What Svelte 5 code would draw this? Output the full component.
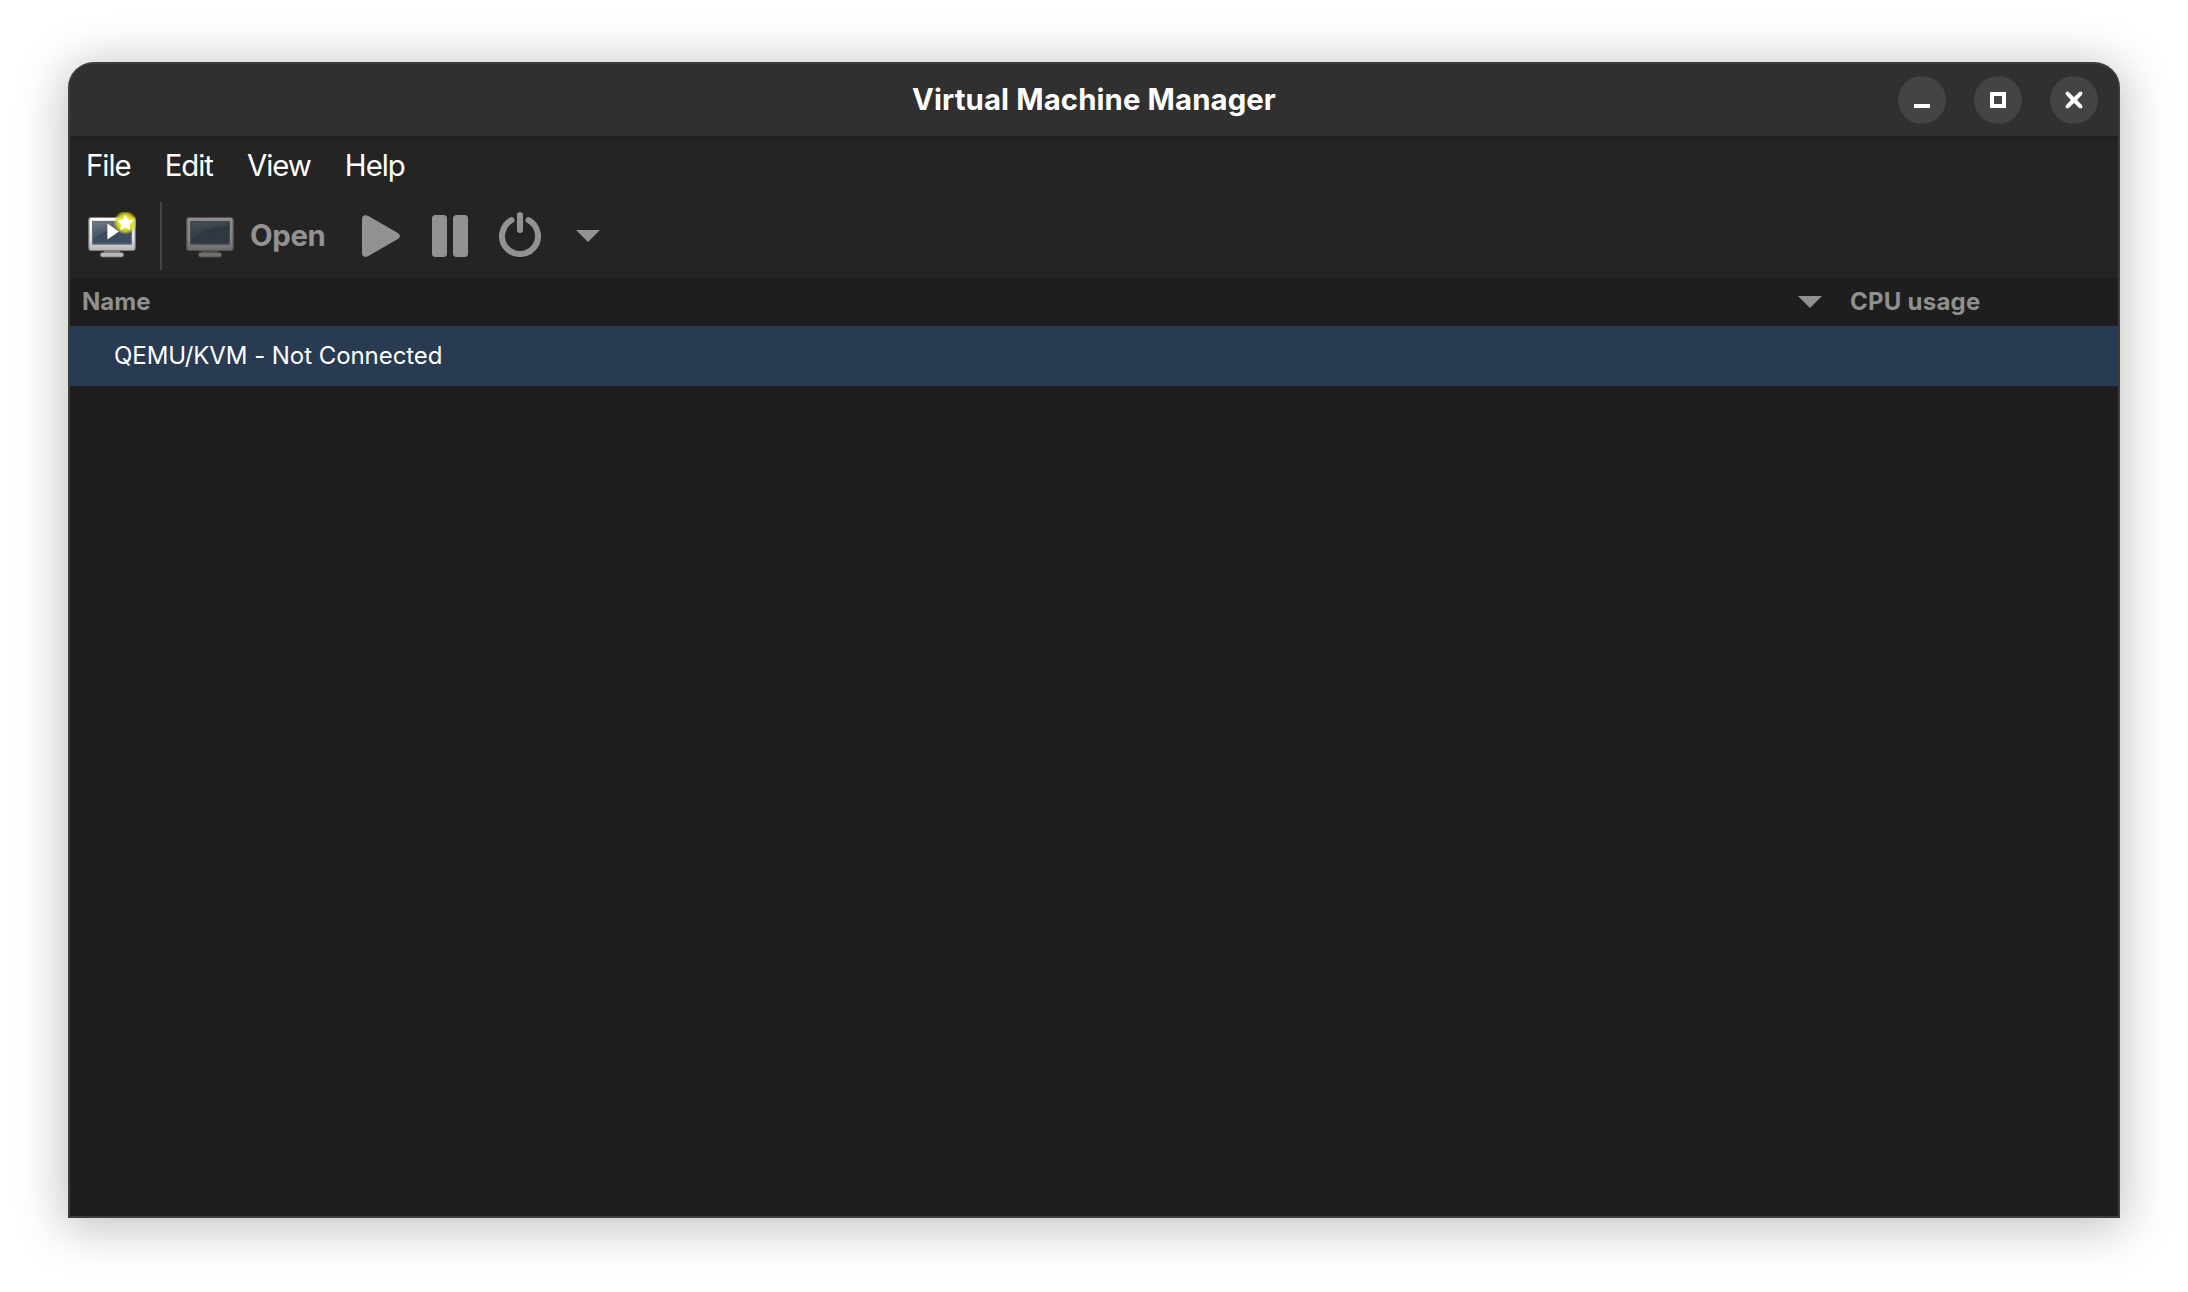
<script>
  const menus = ['File', 'Edit', 'View', 'Help'];
  const connections = ['QEMU/KVM - Not Connected'];
</script>

{#snippet monitor(isNew)}
  <svg class="monitor" width="48" height="48" viewBox="0 0 48 48">
    <defs>
      <linearGradient id="case" x1="0" y1="0" x2="0" y2="1">
        <stop offset="0" stop-color="#fafafa" />
        <stop offset=".65" stop-color="#e4e4e4" />
        <stop offset="1" stop-color="#b4b4b4" />
      </linearGradient>
      <linearGradient id="screen" x1="0" y1="0" x2=".3" y2="1">
        <stop offset="0" stop-color="#66717f" />
        <stop offset=".45" stop-color="#3d4b5f" />
        <stop offset="1" stop-color="#3f4e62" />
      </linearGradient>
      <radialGradient id="halo">
        <stop offset="0" stop-color="#f6f35a" />
        <stop offset=".5" stop-color="#ebe71c" />
        <stop offset=".75" stop-color="#dcd81c" stop-opacity=".8" />
        <stop offset="1" stop-color="#d4d020" stop-opacity="0" />
      </radialGradient>
    </defs>
    <rect x="16" y="38" width="16" height="4" fill="#777" />
    <rect x="12.5" y="40.500" width="23" height="4.500" rx="2" fill="#b9b9b9" stroke="#777" stroke-width=".8" />
    <rect x=".8" y="5.500" width="46.400" height="33" rx="2.400" fill="url(#case)" stroke="#808080" stroke-width="1.200" />
    <rect x="4.600" y="9.500" width="38.800" height="22.600" fill="url(#screen)" stroke="#68717d" stroke-width="1.200" />
    <path d="M5.400 10.400h37.200v3C30 14 18 18 5.400 26z" fill="#fff" opacity=".1" />
    {#if isNew}
      <path d="M19.400 11.500v16L31 19.500z" fill="#fff" />
      <svg x="25" y="0" width="23" height="24" viewBox="25 0 23 24">
        <circle cx="37.400" cy="10.600" r="12" fill="url(#halo)" />
      </svg>
      <path d="M37.400 3l2.300 4.900 5.400.7-3.900 3.800.9 5.300-4.700-2.600-4.700 2.600.9-5.300-3.900-3.800 5.400-.7z" fill="#fff" stroke="#fff" stroke-width=".6" stroke-linejoin="round" />
    {/if}
  </svg>
{/snippet}

<main class="window">
  <header class="titlebar">
    <h1>Virtual Machine Manager</h1>
    <div class="controls">
      <button aria-label="Minimize"><svg width="48" height="48"><path d="M16 28h16v4H16z" fill="#fff" /></svg></button>
      <button aria-label="Maximize"><svg width="48" height="48"><path d="M18 18h12v12H18z" fill="none" stroke="#fff" stroke-width="4" /></svg></button>
      <button aria-label="Close"><svg width="48" height="48"><path d="M16 16h2.4L24 21.4 29.6 16H32v2.4L26.8 24l5.2 5.6V32h-2.4L24 26.800 18.400 32H16v-2.400l5.200-5.600-5.200-5.600z" fill="#fff" stroke="#fff" stroke-width=".5" /></svg></button>
    </div>
  </header>

  <nav class="menubar">
    {#each menus as item}<span>{item}</span>{/each}
  </nav>

  <div class="toolbar">
    {@render monitor(true)}
    <i class="separator"></i>
    <div class="open">
      <div class="dim">{@render monitor(false)}</div>
      <span>Open</span>
    </div>
    <svg class="play" width="38" height="42"><path d="M0 4C0 .8 2.600-.8 6 .8L35 17.400Q38 19 38 21T35 24.600L6 41.200C2.600 42.800 0 41.200 0 38z" /></svg>
    <svg class="pause" width="36" height="42"><rect width="15" height="42" rx="3.500" /><rect x="21" width="15" height="42" rx="3.500" /></svg>
    <svg class="power" width="42" height="46" viewBox="0 0 42 46"><path d="M12.500 9.200A18 18 0 1 0 29.500 9.200M21 4v15" /></svg>
    <svg class="arrow" width="24" height="12"><path d="M0 0h24L12 12z" /></svg>
  </div>

  <section class="list">
    <div class="columns">
      <span class="name">Name</span>
      <svg width="24" height="12"><path d="M0 0h24L12 12z" /></svg>
      <span class="cpu">CPU usage</span>
    </div>
    {#each connections as connection}
      <div class="row"><span>{connection}</span></div>
    {/each}
  </section>
</main>

<style>
  :global(body) { background: #fff; }
  :global(#app) { display: flow-root; height: 1292px; overflow: hidden; }
  .window {
    box-sizing: border-box;
    width: 2052px;
    height: 1156px;
    margin: 62px 68px 0;
    border: 2px solid #3d3d3d;
    border-radius: 26px 26px 0 0;
    background: #242424;
    box-shadow: 0 6px 48px 4px rgba(0, 0, 0, .25);
    overflow: hidden;
    display: flex;
    flex-direction: column;
    font-family: Inter, "Liberation Sans", sans-serif;
    font-size: 29.333px;
    color: #fff;
    white-space: nowrap;
  }
  svg { display: block; flex: none; }
  .titlebar {
    height: 72px;
    flex: none;
    background: #303030;
    display: grid;
    grid-template-columns: 1fr auto 1fr;
    align-items: center;
  }
  h1 {
    grid-column: 2;
    margin: 0;
    font-size: 29.333px;
    line-height: 72px;
    font-weight: 700;
    letter-spacing: .11px;
  }
  .controls { display: flex; justify-content: flex-end; gap: 28px; padding-right: 20px; }
  button { width: 48px; height: 48px; padding: 0; border: 0; border-radius: 50%; background: #444; }
  .menubar {
    height: 58px;
    flex: none;
    display: flex;
    align-items: center;
    gap: 34px;
    padding-left: 16px;
    letter-spacing: -1px;
    box-shadow: inset 0 2px #1f1f1f, inset 0 4px #222;
  }
  .toolbar {
    height: 84px;
    flex: none;
    display: flex;
    align-items: center;
    padding-left: 18px;
    fill: #929292;
  }
  .separator { width: 2px; height: 68px; margin: 0 24px; background: #454545; }
  .open { display: flex; align-items: center; color: #929292; font-weight: 700; }
  .dim { opacity: .5; }
  .open span { margin-left: 16px; width: 76px; padding-bottom: 2px; letter-spacing: -.35px; }
  .play { margin-left: 36px; }
  .pause { margin-left: 32px; }
  .power { margin: 0 0 4px 31px; fill: none; stroke: #929292; stroke-width: 6; stroke-linecap: round; }
  .arrow { margin-left: 35px; }
  .list { flex: 1; background: #1e1e1e; font-size: 24px; }
  .columns {
    height: 48px;
    display: flex;
    align-items: center;
    padding-left: 12px;
    color: #909090;
    fill: #909090;
    font-weight: 700;
  }
  .columns span { padding-bottom: 2px; }
  .name { width: 1716px; }
  .cpu { margin-left: 28px; letter-spacing: .25px; }
  .row { box-sizing: border-box; height: 60px; display: flex; align-items: center; padding: 0 0 2px 44px; letter-spacing: -.06px; background: #283b53; }
</style>
